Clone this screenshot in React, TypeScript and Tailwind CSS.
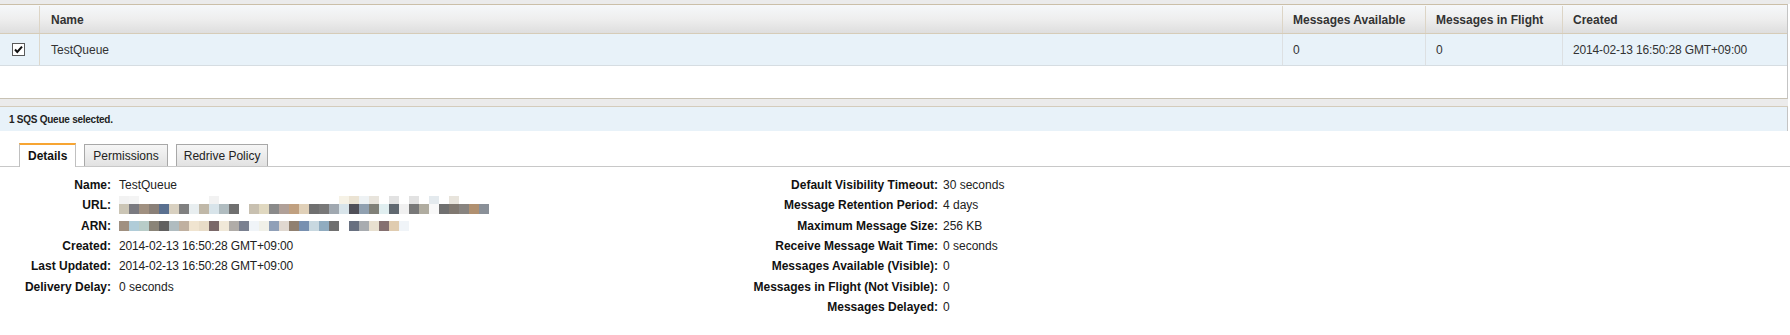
import React from "react";

const urlTop: [number, string][] = [
  [0, "#f2f2f2"], [1, "#f4f4f4"], [9, "#f2f2f2"],
  [22, "#f6f2e6"], [23, "#ebe3d3"], [24, "#eef2f4"], [25, "#e8e4dc"],
  [27, "#e2e2e2"], [29, "#e2e2e2"], [31, "#e4eaee"], [33, "#e8e4dc"],
];

const urlMain: string[] = [
  "#cbc5b5", "#7a7a80", "#a09080", "#8a8078", "#5a7090", "#d8d0c0", "#808080", "#e8eef0",
  "#c0b8a8", "#d8e4ea", "#b0bcc0", "#707070", "#ffffff",
  "#c8c0b0", "#e0d8c0", "#8a8a8a", "#b0a098", "#c0a080", "#e0d0b8", "#707070", "#787878",
  "#a0a8b0", "#d8e4ea", "#505058", "#90a0b0", "#808078", "#e0eef0", "#606870", "#f0f0f0",
  "#787878", "#b0aca0", "#f8f8f8", "#707070", "#807870", "#888480", "#b09070", "#8a9098",
];

const arn: string[] = [
  "#a09080", "#b0ccd8", "#b8ccc8", "#8a8478", "#606060", "#b0bcc0", "#c0b0a0", "#f0e4d0",
  "#e8dcc8", "#7a6868", "#f0e8d8", "#b0aca8", "#7a8090", "#f0f4f8", "#f0f0e8", "#90a0b8",
  "#e0d8d0", "#908070", "#7890b0", "#c8d8e0", "#90acc0", "#707070", "#ffffff", "#687080",
  "#a8acb0", "#e8e0d0", "#857070", "#e0ccb0", "#f0f4f8",
];

function Blocks({ colors, h }: { colors: string[]; h: number }) {
  return (
    <div className="flex">
      {colors.map((c, i) => (
        <div key={i} className="w-[10px]" style={{ background: c, height: h }} />
      ))}
    </div>
  );
}

function UrlBlur() {
  const top: string[] = Array(37).fill("transparent");
  urlTop.forEach(([i, c]) => (top[i] = c));
  return (
    <div className="flex flex-col pt-[1px]">
      <Blocks colors={top} h={8} />
      <Blocks colors={urlMain} h={10} />
    </div>
  );
}

function Check() {
  return (
    <div className="w-[13px] h-[13px] border border-[#5a5a5a] bg-white flex items-center justify-center">
      <svg width="9" height="9" viewBox="0 0 9 9">
        <path d="M1 4.5 L3.3 7 L8 1.6" stroke="#111" strokeWidth="2" fill="none" />
      </svg>
    </div>
  );
}

const leftRows: [string, React.ReactNode][] = [
  ["Name:", "TestQueue"],
  ["URL:", <UrlBlur key="u" />],
  ["ARN:", <div key="a" className="pt-[5px]"><Blocks colors={arn} h={10} /></div>],
  ["Created:", <span key="c" className="tracking-[-0.15px]">2014-02-13 16:50:28 GMT+09:00</span>],
  ["Last Updated:", <span key="l" className="tracking-[-0.15px]">2014-02-13 16:50:28 GMT+09:00</span>],
  ["Delivery Delay:", "0 seconds"],
];

const rightRows: [string, string][] = [
  ["Default Visibility Timeout:", "30 seconds"],
  ["Message Retention Period:", "4 days"],
  ["Maximum Message Size:", "256 KB"],
  ["Receive Message Wait Time:", "0 seconds"],
  ["Messages Available (Visible):", "0"],
  ["Messages in Flight (Not Visible):", "0"],
  ["Messages Delayed:", "0"],
];

export default function App() {
  return (
    <div
      className="w-[1790px] h-[335px] bg-white text-[12px] text-[#222] overflow-hidden"
      style={{ fontFamily: '"Liberation Sans", Arial, sans-serif' }}
    >
      <div className="h-[4px] bg-[#ebebeb]" />
      {/* table */}
      <div className="w-[1788px] h-[95px] border-t border-t-[#cbbfa8] border-r border-r-[#c4c4c4] border-b border-b-[#c8c2b4] bg-white">
        <div className="grid grid-cols-[40px_1fr_143px_137px_224px] h-[29px] pt-[1px] bg-gradient-to-b from-[#f6f8fa] via-[#eeeeee] to-[#dedede] border-b border-b-[#d6ccb8] font-bold text-[#333]">
          <div className="border-r border-r-[#ddd5c6]" />
          <div className="border-r border-r-[#ddd5c6] pl-[11px] flex items-center">Name</div>
          <div className="border-r border-r-[#ddd5c6] pl-[10px] flex items-center">Messages Available</div>
          <div className="border-r border-r-[#ddd5c6] pl-[10px] flex items-center">Messages in Flight</div>
          <div className="pl-[10px] flex items-center">Created</div>
        </div>
        <div className="grid grid-cols-[40px_1fr_143px_137px_224px] h-[32px] bg-[#e8f2f9] border-b border-b-[#d6dde2] text-[#333]">
          <div className="border-r border-r-[#ddd8cc] flex items-center pl-[12px]">
            <Check />
          </div>
          <div className="border-r border-r-[#dde0e2] pl-[11px] flex items-center">TestQueue</div>
          <div className="border-r border-r-[#dde0e2] pl-[10px] flex items-center">0</div>
          <div className="border-r border-r-[#dde0e2] pl-[10px] flex items-center">0</div>
          <div className="pl-[10px] flex items-center tracking-[-0.15px]">2014-02-13 16:50:28 GMT+09:00</div>
        </div>
      </div>
      {/* band */}
      <div className="w-[1788px] h-[8px] bg-[#ebebeb] border-b border-b-[#d4ccbc]" />
      <div className="w-[1788px] h-[24px] bg-[#e8f2f9] border-r border-r-[#c4c4c4] flex items-center pl-[9px] text-[10px] tracking-[-0.25px] font-bold text-[#222]">
        1 SQS Queue selected.
      </div>
      {/* tabs */}
      <div className="mt-[12px] h-[24px] flex items-end gap-[8px] pl-[19px] border-b border-b-[#c8c8c8]">
        <div className="h-[24px] px-[8px] bg-white border-t-2 border-t-[#f7a533] border-l border-r border-l-[#c0c0c0] border-r-[#c0c0c0] font-bold text-[#111] flex items-center -mb-[1px] pb-[1px]">
          Details
        </div>
        <div className="h-[22px] px-[8px] bg-gradient-to-b from-[#f6f6f6] to-[#e2e2e2] border border-[#a8a8a8] border-b-0 text-[#222] flex items-center">
          Permissions
        </div>
        <div className="h-[22px] px-[7px] bg-gradient-to-b from-[#f6f6f6] to-[#e2e2e2] border border-[#a8a8a8] border-b-0 text-[#222] flex items-center">
          Redrive Policy
        </div>
      </div>
      {/* details */}
      <div className="flex pt-[8px]">
        <div className="w-[600px] grid grid-cols-[111px_auto] gap-x-[8px] auto-rows-[20.33px]">
          {leftRows.map(([l, v], i) => (
            <React.Fragment key={i}>
              <div className="text-right font-bold text-[#111] leading-[20px]">{l}</div>
              <div className="leading-[20px] text-[#222]">{v}</div>
            </React.Fragment>
          ))}
        </div>
        <div className="grid grid-cols-[338px_auto] gap-x-[5px] auto-rows-[20.33px]">
          {rightRows.map(([l, v], i) => (
            <React.Fragment key={i}>
              <div className="text-right font-bold text-[#111] leading-[20px]">{l}</div>
              <div className="leading-[20px] text-[#222]">{v}</div>
            </React.Fragment>
          ))}
        </div>
      </div>
    </div>
  );
}
